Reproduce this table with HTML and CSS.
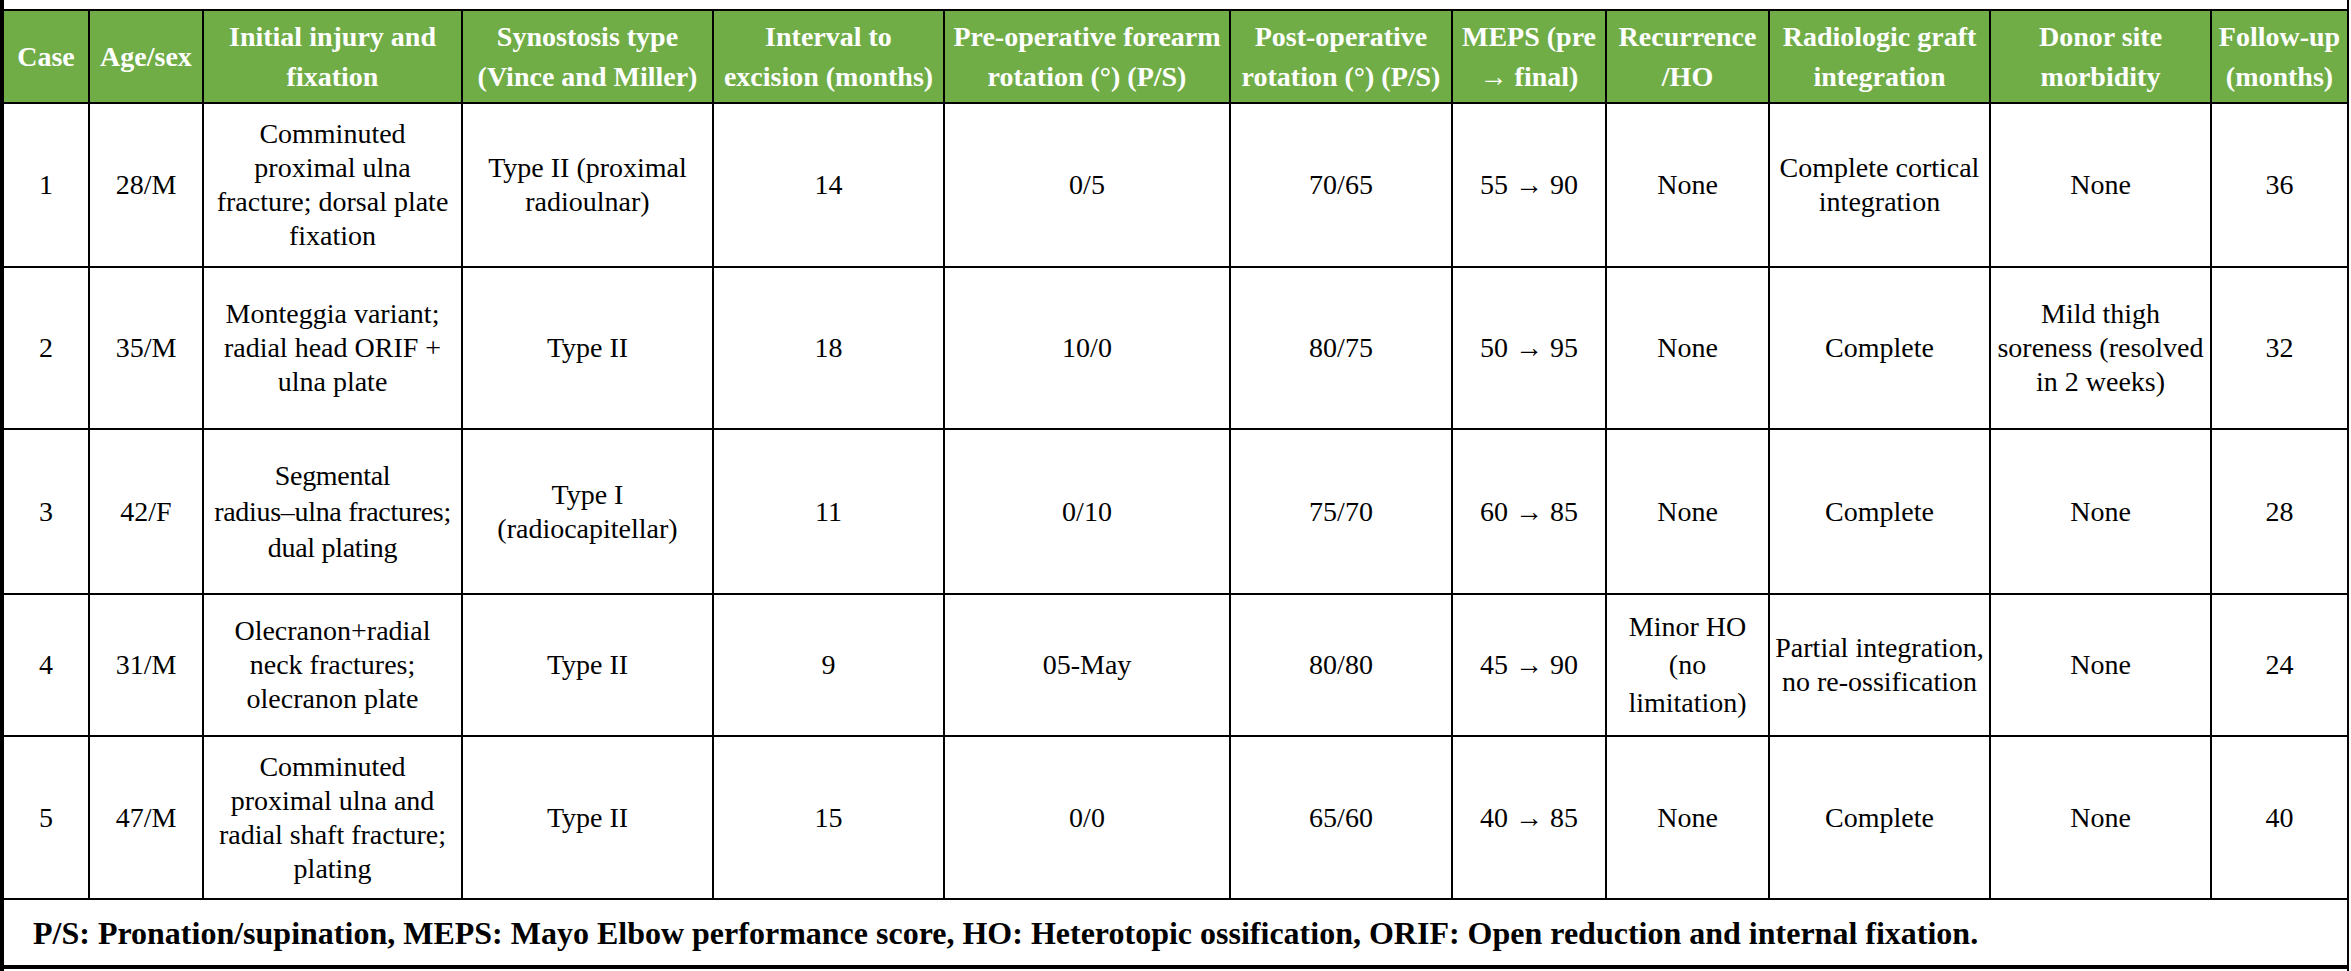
FILE: index.html
```html
<!DOCTYPE html>
<html lang="en">
<head>
<meta charset="utf-8">
<title>Synostosis excision outcomes</title>
<link rel="stylesheet" href="styles.css">
</head>
<body>
<div class="frame">
  <table class="data">
    <colgroup>
      <col class="c-case"><col class="c-age"><col class="c-injury"><col class="c-type"><col class="c-interval"><col class="c-pre"><col class="c-post"><col class="c-meps"><col class="c-rec"><col class="c-graft"><col class="c-donor"><col class="c-fu">
    </colgroup>
    <thead>
      <tr class="r-head">
        <th>Case</th>
        <th>Age/sex</th>
        <th>Initial injury and fixation</th>
        <th>Synostosis type (Vince and Miller)</th>
        <th>Interval to excision (months)</th>
        <th>Pre-operative forearm rotation (°) (P/S)</th>
        <th>Post-operative rotation (°) (P/S)</th>
        <th>MEPS (pre → final)</th>
        <th>Recurrence /HO</th>
        <th>Radiologic graft integration</th>
        <th>Donor site morbidity</th>
        <th>Follow-up (months)</th>
      </tr>
    </thead>
    <tbody>
      <tr class="r1">
        <td>1</td><td>28/M</td>
        <td>Comminuted proximal ulna fracture; dorsal plate fixation</td>
        <td>Type II (proximal radioulnar)</td>
        <td>14</td><td>0/5</td><td>70/65</td><td>55 → 90</td><td>None</td>
        <td>Complete cortical integration</td><td>None</td><td>36</td>
      </tr>
      <tr class="r2">
        <td>2</td><td>35/M</td>
        <td>Monteggia variant; radial head ORIF + ulna plate</td>
        <td>Type II</td>
        <td>18</td><td>10/0</td><td>80/75</td><td>50 → 95</td><td>None</td>
        <td>Complete</td><td>Mild thigh soreness (resolved in 2 weeks)</td><td>32</td>
      </tr>
      <tr class="r3">
        <td>3</td><td>42/F</td>
        <td class="tight">Segmental<br><span class="nowrap">radius–ulna fractures;</span><br>dual plating</td>
        <td>Type I (radiocapitellar)</td>
        <td>11</td><td>0/10</td><td>75/70</td><td>60 → 85</td><td>None</td>
        <td>Complete</td><td>None</td><td>28</td>
      </tr>
      <tr class="r4">
        <td>4</td><td>31/M</td>
        <td>Olecranon+radial neck fractures; olecranon plate</td>
        <td>Type II</td>
        <td>9</td><td>05-May</td><td>80/80</td><td>45 → 90</td><td class="loose">Minor HO (no limitation)</td>
        <td>Partial integration, no re-ossification</td><td>None</td><td>24</td>
      </tr>
      <tr class="r5">
        <td>5</td><td>47/M</td>
        <td>Comminuted proximal ulna and radial shaft fracture; plating</td>
        <td>Type II</td>
        <td>15</td><td>0/0</td><td>65/60</td><td>40 → 85</td><td>None</td>
        <td>Complete</td><td>None</td><td>40</td>
      </tr>
    </tbody>
    <tfoot>
      <tr class="r-foot">
        <td colspan="12" class="note">P/S: Pronation/supination, MEPS: Mayo Elbow performance score, HO: Heterotopic ossification, ORIF: Open reduction and internal fixation.</td>
      </tr>
    </tfoot>
  </table>
</div>
</body>
</html>
```

FILE: styles.css
```css
html, body {
  margin: 0;
  padding: 0;
  background: #fff;
}

body {
  font-family: "Liberation Serif", "Times New Roman", serif;
  color: #000;
}

.frame {
  width: 2349px;
  height: 971px;
  box-sizing: border-box;
  border-left: 4px solid #000;
  border-right: 2px solid #000;
  padding-top: 9px;
}

.data {
  width: 2343px;
  border-collapse: collapse;
  table-layout: fixed;
  font-size: 28px;
  line-height: 34px;
}

.c-case { width: 85px; }
.c-age { width: 114px; }
.c-injury { width: 259px; }
.c-type { width: 251px; }
.c-interval { width: 231px; }
.c-pre { width: 286px; }
.c-post { width: 222px; }
.c-meps { width: 154px; }
.c-rec { width: 163px; }
.c-graft { width: 221px; }
.c-donor { width: 221px; }
.c-fu { width: 136px; }

.data th,
.data td {
  border: 2px solid #000;
  padding: 0 3px;
  text-align: center;
  vertical-align: middle;
  font-weight: normal;
}

.data tr > :first-child { border-left: none; }
.data tr > :last-child { border-right: none; }

.data thead th {
  background: #70ad47;
  color: #fff;
  font-weight: bold;
  line-height: 40px;
}

.nowrap { white-space: nowrap; }

.data td.tight {
  padding: 0 1px;
  letter-spacing: -0.3px;
  line-height: 36px;
}

.data td.loose { line-height: 38px; }

.r-head { height: 93px; }
.r1 { height: 164px; }
.r2 { height: 162px; }
.r3 { height: 165px; }
.r4 { height: 142px; }
.r5 { height: 163px; }
.r-foot { height: 68px; }

.data .note {
  text-align: left;
  font-weight: bold;
  font-size: 32px;
  padding-left: 29px;
  border-bottom: 4px solid #000;
}
```
